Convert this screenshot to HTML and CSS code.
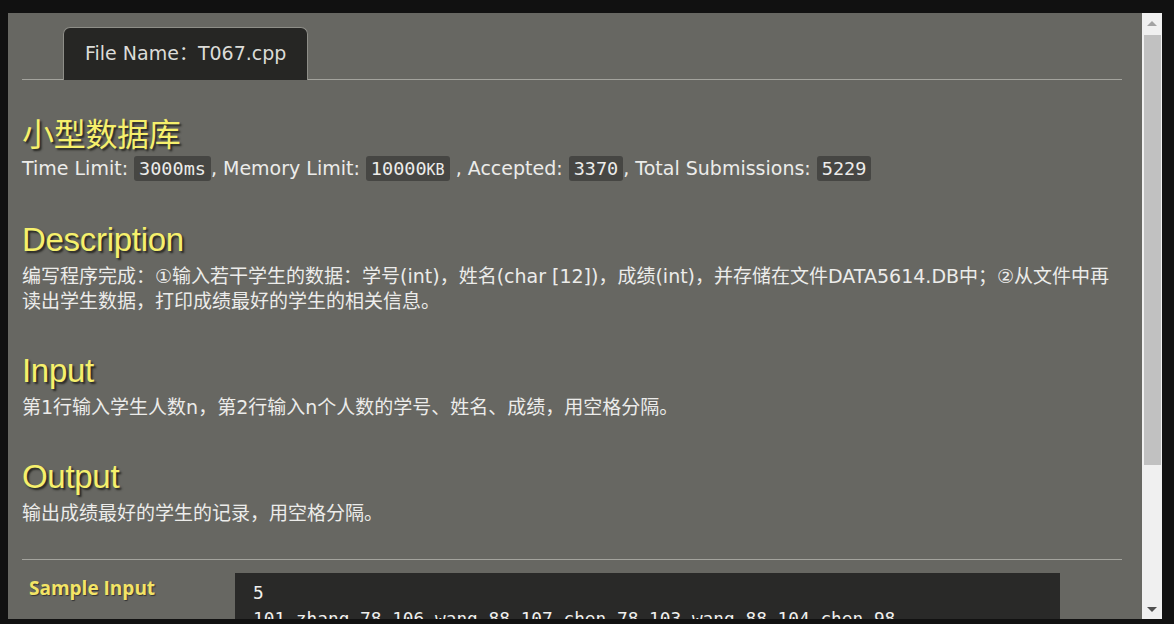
FILE: index.html
```html
<!DOCTYPE html>
<html lang="zh">
<head>
<meta charset="utf-8">
<title>T067</title>
<link rel="stylesheet" href="styles.css">
</head>
<body>
<div class="window">
  <div class="pane">
    <div class="tabs">
      <div class="tab">File Name：T067.cpp</div>
    </div>
    <h1 class="heading title">小型数据库</h1>
    <p class="stats">Time Limit: <code>3000ms</code>, Memory Limit: <code>10000<span class="unit">KB</span></code> , Accepted: <code>3370</code>, Total Submissions: <code>5229</code></p>

    <h2 class="heading">Description</h2>
    <p class="text">编写程序完成：①输入若干学生的数据：学号(int)，姓名(char [12])，成绩(int)，并存储在文件DATA5614.DB中；②从文件中再读出学生数据，打印成绩最好的学生的相关信息。</p>

    <h2 class="heading">Input</h2>
    <p class="text">第1行输入学生人数n，第2行输入n个人数的学号、姓名、成绩，用空格分隔。</p>

    <h2 class="heading">Output</h2>
    <p class="text">输出成绩最好的学生的记录，用空格分隔。</p>

    <div class="samples">
      <div class="sample-row">
        <div class="sample-label">Sample Input</div>
        <pre class="sample-box">5
101 zhang 78 106 wang 88 107 chen 78 103 wang 88 104 chen 98</pre>
      </div>
    </div>
  </div>
  <div class="scrollbar">
    <div class="arrow up"></div>
    <div class="track"><div class="thumb"></div></div>
    <div class="arrow down"></div>
  </div>
</div>
</body>
</html>
```
FILE: styles.css
```css
html, body {
  margin: 0;
  padding: 0;
  height: 624px;
  overflow: hidden;
  background: #111111;
}
.window {
  display: flex;
  box-sizing: border-box;
  height: 624px;
  padding: 13px 12px 5px 8px;
}
.pane {
  flex: 1;
  background: #676762;
  overflow: hidden;
  padding: 0 20px 0 14px;
  color: #ececea;
  font-family: "DejaVu Sans", "Noto Sans CJK SC", sans-serif;
}
.tabs {
  margin-top: 14px;
  padding-left: 41px;
  border-bottom: 1px solid #a3a39d;
  display: flex;
}
.tab {
  background: #262624;
  border: 1px solid #8e8e88;
  border-bottom: none;
  border-radius: 7px 7px 0 0;
  height: 52px;
  line-height: 50px;
  padding: 0 21px;
  margin-bottom: -1px;
  font-size: 19px;
  color: #dcdcd8;
}
.heading {
  margin: 0;
  font-family: "Liberation Sans", "Noto Sans CJK SC", sans-serif;
  font-weight: normal;
  font-size: 33px;
  line-height: 40px;
  color: #f6f06c;
  text-shadow: 2px 2px 2px #262622;
  letter-spacing: -0.3px;
}
.title {
  margin-top: 32px;
  font-family: "Noto Sans CJK SC", sans-serif;
  font-size: 32px;
}
.stats, .text {
  margin: 4px 0 37px;
  font-size: 19px;
  line-height: 25px;
}
.stats code {
  font-family: "DejaVu Sans Mono", monospace;
  font-size: 18.5px;
  background: #464643;
  border-radius: 3px;
  padding: 2px 5px;
}
.unit {
  font-size: 15px;
}
.samples {
  border-top: 1px solid #a3a39d;
  margin-top: -4px;
  padding-top: 13px;
}
.sample-row {
  display: flex;
}
.sample-label {
  width: 213px;
  padding-left: 7px;
  box-sizing: border-box;
  color: #f3e466;
  font-family: "Open Sans", sans-serif;
  font-weight: bold;
  font-size: 19px;
  line-height: 30px;
  text-shadow: 1px 1px 1px #333;
}
.sample-box {
  margin: 0;
  width: 825px;
  box-sizing: border-box;
  background: #292928;
  color: #f0f0ee;
  padding: 7px 18px;
  font-family: "DejaVu Sans Mono", monospace;
  font-size: 17.8px;
  line-height: 26px;
}
.scrollbar {
  width: 20px;
  background: #f0f0f0;
  display: flex;
  flex-direction: column;
}
.arrow {
  height: 20px;
  display: flex;
  align-items: center;
  justify-content: center;
}
.arrow.up::before {
  content: "";
  border-left: 5px solid transparent;
  border-right: 5px solid transparent;
  border-bottom: 5px solid #a3a3a3;
}
.arrow.down::before {
  content: "";
  border-left: 5px solid transparent;
  border-right: 5px solid transparent;
  border-top: 5px solid #505050;
}
.track {
  flex: 1;
  padding: 2px 1px 0 2px;
}
.thumb {
  height: 430px;
  background: #c1c1c1;
}
```
